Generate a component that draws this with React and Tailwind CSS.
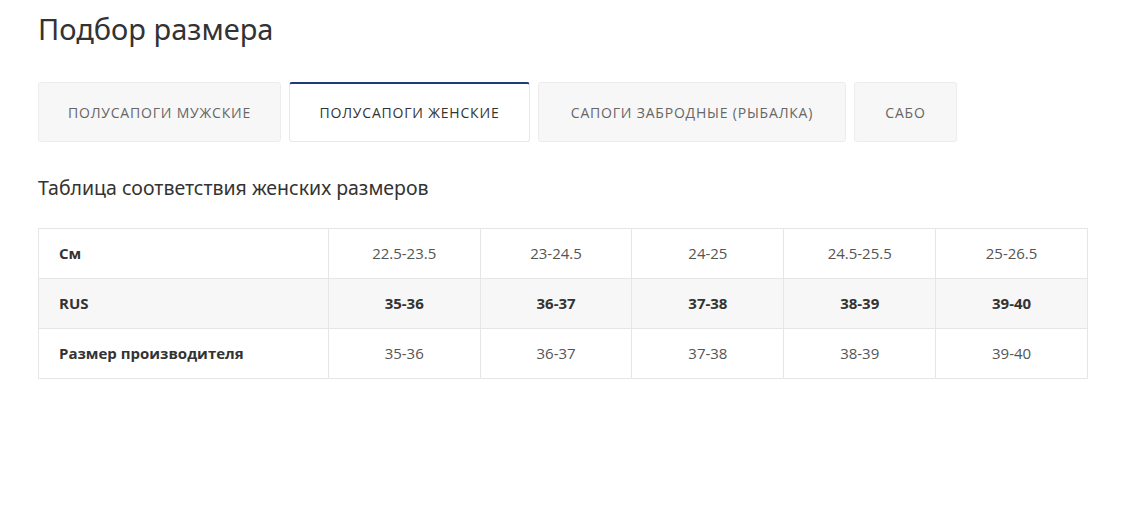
import React from 'react';

const tabs = [
  { label: 'Полусапоги мужские', width: 'w-[243px]' },
  { label: 'Полусапоги женские', width: 'w-[241px]', active: true },
  { label: 'Сапоги забродные (рыбалка)', width: 'w-[308px]' },
  { label: 'Сабо', width: 'w-[103px]' },
];

const rows = [
  { label: 'См', values: ['22.5-23.5', '23-24.5', '24-25', '24.5-25.5', '25-26.5'] },
  { label: 'RUS', values: ['35-36', '36-37', '37-38', '38-39', '39-40'], bold: true },
  { label: 'Размер производителя', values: ['35-36', '36-37', '37-38', '38-39', '39-40'] },
];

const App = () => {
  return (
    <div className="bg-white min-h-screen w-[1134px] h-[515px] px-[38px] pt-[10px] font-['Open_Sans',sans-serif] text-[#333]">
      <h1 className="text-[29px] leading-[38px] text-[#333] font-['Noto_Sans',sans-serif]">Подбор размера</h1>

      {/* Tabs */}
      <div className="flex gap-[8px] mt-[34px]">
        {tabs.map(tab => (
          <div
            key={tab.label}
            className={`${tab.width} h-[60px] flex items-center justify-center rounded-[3px] border text-[14px] uppercase tracking-[0.8px] ${
              tab.active
                ? 'bg-white border-[#e8e8e8] border-t-2 border-t-[#1d3c78] text-[#333]'
                : 'bg-[#f7f7f7] border-[#ececec] text-[#666]'
            }`}
          >
            {tab.label}
          </div>
        ))}
      </div>

      <h2 className="mt-[33px] text-[19.5px] leading-[26px] text-[#333] font-['Noto_Sans',sans-serif]">Таблица соответствия женских размеров</h2>

      {/* Size table */}
      <table className="mt-[27px] w-[1050px] border-collapse text-[15px]">
        <tbody>
          {rows.map((row, i) => (
            <tr key={row.label} className={i === 1 ? 'bg-[#f7f7f7]' : 'bg-white'}>
              <td className="w-[290px] h-[50px] border border-[#e6e6e6] pl-[20px] font-bold text-[#333]">{row.label}</td>
              {row.values.map((v, j) => (
                <td
                  key={j}
                  className={`w-[152px] h-[50px] border border-[#e6e6e6] text-center ${row.bold ? 'font-bold text-[#333]' : 'text-[#555]'}`}
                >
                  {v}
                </td>
              ))}
            </tr>
          ))}
        </tbody>
      </table>
    </div>
  );
};

export default App;
